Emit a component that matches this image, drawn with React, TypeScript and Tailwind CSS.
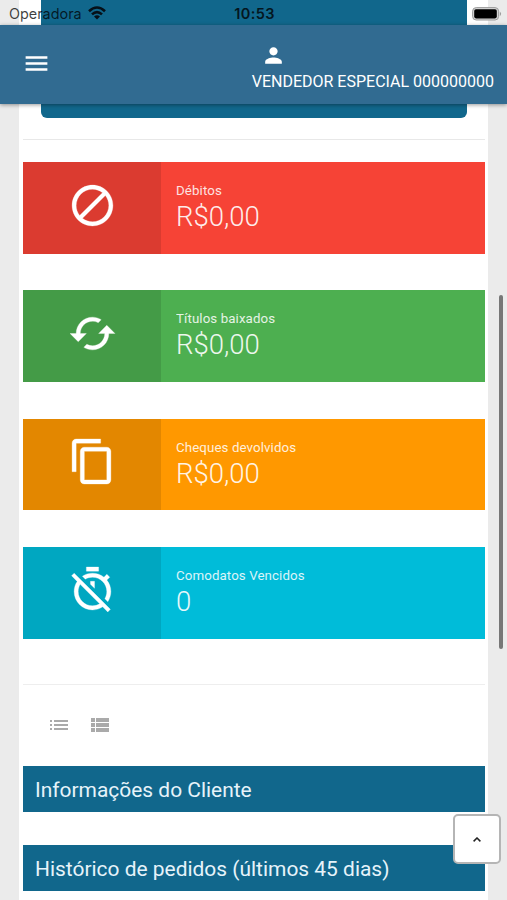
import type { ReactNode } from "react";
import { MdMenu, MdPerson, MdList, MdViewList } from "react-icons/md";

const icon = (d: string) => (
  <svg viewBox="0 0 24 24" className="size-[49px]" fill="currentColor" stroke="currentColor" strokeWidth="0.15">
    <path d={d} />
  </svg>
);

const blocked = icon(
  "M12 2C6.5 2 2 6.5 2 12s4.5 10 10 10 10-4.5 10-10S17.5 2 12 2zM4 12c0-4.4 3.6-8 8-8 1.8 0 3.5.6 4.9 1.7L5.7 16.9C4.6 15.5 4 13.8 4 12zm8 8c-1.8 0-3.5-.6-4.9-1.7L18.3 7.1C19.4 8.5 20 10.2 20 12c0 4.4-3.6 8-8 8z"
);
const cached = icon(
  "M19 8l-4 4h3c0 3.31-2.69 6-6 6-1.01 0-1.97-.25-2.8-.7l-1.46 1.46C8.97 19.54 10.43 20 12 20c4.42 0 8-3.58 8-8h3l-4-4zM6 12c0-3.31 2.69-6 6-6 1.01 0 1.97.25 2.8.7l1.46-1.46C15.03 4.46 13.57 4 12 4c-4.42 0-8 3.58-8 8H1l4 4 4-4H6z"
);
const copy = icon(
  "M16 1H4c-1.1 0-2 .9-2 2v14h2V3h12V1zm3 4H8c-1.1 0-2 .9-2 2v14c0 1.1.9 2 2 2h11c1.1 0 2-.9 2-2V7c0-1.1-.9-2-2-2zm0 16H8V7h11v14z"
);
const timerOff = icon(
  "M19.04 4.55l-1.42 1.42C16.07 4.74 14.12 4 12 4c-1.83 0-3.53.55-4.95 1.48l1.46 1.46C9.53 6.35 10.73 6 12 6c3.87 0 7 3.13 7 7 0 1.27-.35 2.47-.94 3.49l1.45 1.45C20.45 16.53 21 14.83 21 13c0-2.12-.74-4.07-1.97-5.61l1.42-1.42-1.41-1.42zM15 1H9v2h6V1zm-4 8.44l2 2V8h-2v1.44zM3.02 4L1.75 5.27 4.5 8.03C3.55 9.45 3 11.16 3 13c0 4.97 4.02 9 9 9 1.84 0 3.55-.55 4.98-1.5l2.5 2.5 1.27-1.27-7.71-7.71L3.02 4zM12 20c-3.87 0-7-3.13-7-7 0-1.28.35-2.48.95-3.52l9.56 9.56c-1.03.61-2.23.96-3.51.96z"
);

function InfoBox({ color, label, value, children }: { color: string; label: string; value: string; children: ReactNode }) {
  return (
    <div className={`flex h-[91.67px] text-white ${color}`}>
      <div className="flex w-[138px] justify-center bg-black/[0.11] pt-[18.5px] text-white">{children}</div>
      <div className="pl-[15px] pt-[19px]">
        <div className="text-[13.3px] leading-[19px] tracking-[0.1px] opacity-85">{label}</div>
        <div className="text-[27.5px] font-light leading-[34px] opacity-90">{value}</div>
      </div>
    </div>
  );
}

function Panel({ title }: { title: string }) {
  return (
    <div className="flex h-[46.33px] items-center bg-[#11678c] pl-3 pt-[3px] text-[20.95px] text-[#e6f3fa]">{title}</div>
  );
}

function StatusBar() {
  return (
    <div className="flex h-[25px] items-center justify-between pl-[9px] pr-[5px] pt-[2px] font-[Inter,sans-serif]">
      <div className="flex w-[218px] items-center gap-[6px]">
        <span className="text-[14.4px] text-black/75">Operadora</span>
        <svg viewBox="0 0 18 14" className="h-[14px] w-[18px]" fill="none" stroke="#061018" strokeWidth="2.6">
          <path d="M1 5.2Q9-2.2 17 5.2M4 8.4Q9 3.8 14 8.4" />
          <path d="M6 10.6Q9 8 12 10.6L9 13.6Z" fill="#061018" stroke="none" />
        </svg>
      </div>
      <span className="relative -left-px text-[14.5px] font-semibold tracking-[0.4px] text-[#04161f]">10:53</span>
      <div className="flex w-[218px] justify-end">
        <svg viewBox="0 0 30 14" className="h-[14px] w-[30px]">
          <rect x="0.6" y="0.6" width="26" height="12.4" rx="3.6" fill="#d5d5d5" stroke="#9b9b9b" />
          <rect x="2.2" y="2.2" width="22.6" height="9.2" rx="1.8" fill="#000" />
          <path d="M27.8 4.4q2.6 2.4 0 4.8z" fill="#9b9b9b" />
        </svg>
      </div>
    </div>
  );
}

export default function App() {
  return (
    <div className="relative h-[900px] w-[507px] overflow-hidden bg-[#ebebeb] font-[Roboto,sans-serif]">
      <main className="ml-[19px] h-[900px] w-[469px] bg-white pl-1 pr-[3px]">
        <div className="ml-[18px] h-[118px] w-[426px] rounded-b-[6px] bg-[#11678c]" />
        <div className="mt-[21px] h-px bg-[#e8e8e8]" />
        <div className="mt-[22px] flex flex-col gap-[36.67px]">
          <InfoBox color="bg-[#f64336]" label="Débitos" value="R$0,00">{blocked}</InfoBox>
          <InfoBox color="bg-[#4daf50]" label="Títulos baixados" value="R$0,00">{cached}</InfoBox>
          <InfoBox color="bg-[#ff9800]" label="Cheques devolvidos" value="R$0,00">{copy}</InfoBox>
          <InfoBox color="bg-[#00bcd9]" label="Comodatos Vencidos" value="0">{timerOff}</InfoBox>
        </div>
        <div className="mt-[45px] h-px bg-[#eeeeee]" />
        <div className="flex h-[81px] items-center gap-[17px] pl-6 text-[#aaaaaa]">
          <MdList className="size-6" />
          <MdViewList className="size-6" />
        </div>
        <div className="flex flex-col gap-[33px]">
          <Panel title="Informações do Cliente" />
          <Panel title="Histórico de pedidos (últimos 45 dias)" />
        </div>
      </main>

      <div className="absolute inset-x-0 top-0">
        <StatusBar />
        <header className="flex h-[79px] items-start justify-between bg-[#316b91] pl-[22px] pr-[13px] text-white shadow-[0_1px_4px_rgba(0,0,0,0.4)]">
          <MdMenu className="mt-[24px] size-[29px]" />
          <div className="pt-[18px]">
            <MdPerson className="ml-[9px] size-[25px]" />
            <div className="mt-1 text-[16px] leading-[20px]">VENDEDOR ESPECIAL 000000000</div>
          </div>
        </header>
      </div>

      <div className="absolute left-[499px] top-[295px] h-[354px] w-[4px] rounded-full bg-[#777777]" />

      <button className="absolute left-[453px] top-[814px] flex h-[50px] w-[48px] items-center justify-center rounded-[5px] border-2 border-[#b5b5b5] bg-white">
        <svg viewBox="0 0 8 5" className="h-[5px] w-[8px]" fill="none" stroke="#222" strokeWidth="1.5">
          <path d="M0.6 4.4 4 1l3.4 3.4" />
        </svg>
      </button>
    </div>
  );
}
